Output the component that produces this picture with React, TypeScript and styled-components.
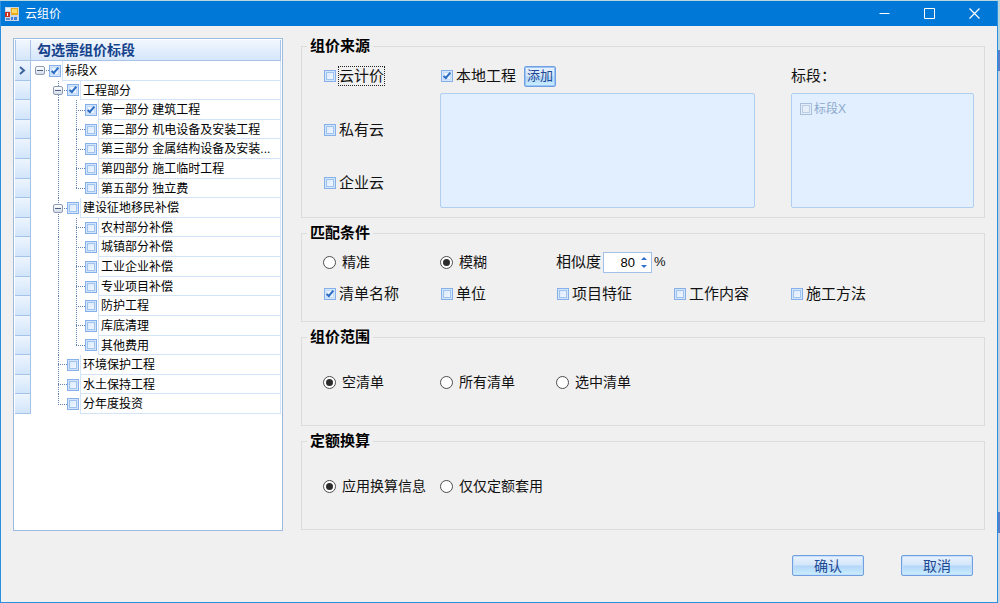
import React, { useState } from "react";
import styled, { createGlobalStyle, css } from "styled-components";

const GlobalStyle = createGlobalStyle`
  *, *::before, *::after { box-sizing: border-box; }
  body {
    margin: 0;
    font-family: "Liberation Sans", "Noto Sans CJK SC", sans-serif;
    font-size: 15px;
    color: #111;
  }
  button, input { font-family: inherit; }
`;

/* ---------- window frame ---------- */

const Desktop = styled.div`
  display: flex;
  min-height: 100vh;
  padding: 1px 2px 0 0;
  background: linear-gradient(
    to bottom,
    #b9d5dd 0 50px,
    #5a7fc6 50px 71px,
    #c6cedb 71px 512px,
    #5a7fc6 512px 533px,
    #ccd3df 533px
  );
`;

const Window = styled.main`
  flex: 1;
  min-width: 0;
  display: flex;
  flex-direction: column;
  background: #f0f0f0;
  border: 1px solid #2d8fe0;
  border-top: 0;
`;

const TitleBar = styled.header`
  display: flex;
  align-items: center;
  height: 25px;
  padding-left: 4px;
  background: #0078d7;
  color: #fff;
`;

const Title = styled.h1`
  flex: 1;
  margin: 0 0 0 6px;
  font-size: 12px;
  line-height: 24px;
  font-weight: 400;
`;

const CaptionButton = styled.button`
  display: grid;
  place-items: center;
  width: 45px;
  height: 25px;
  padding: 0;
  border: 0;
  background: none;
  color: #fff;
`;

const Body = styled.div`
  display: flex;
  gap: 18px;
  padding: 12px 12px 0;
`;

const Footer = styled.footer`
  display: flex;
  justify-content: flex-end;
  gap: 37px;
  padding: 24px 24px 24px;
`;

const Button = styled.button<{ $small?: boolean }>`
  width: ${(p) => (p.$small ? 32 : 72)}px;
  height: 21px;
  padding: 0;
  border: 1px solid #6fa0e2;
  border-radius: 2px;
  background: linear-gradient(#eaf3fe 0%, #d3e6fb 48%, #b4d5f8 52%, #c9f0ff 100%);
  box-shadow: inset 0 0 0 1px ${(p) => (p.$small ? "#9cc3f5" : "#c6defa")};
  color: #1e4a94;
  font-size: ${(p) => (p.$small ? 13 : 14)}px;
  line-height: 18px;
`;

/* ---------- form controls ---------- */

const Check = styled.input.attrs({ type: "checkbox" })`
  appearance: none;
  display: grid;
  place-items: center;
  flex: none;
  width: 12px;
  height: 12px;
  margin: 0;
  border: 1px solid #86b0ea;
  background: linear-gradient(135deg, #d3e6fc, #f8fbff);
  box-shadow: inset 0 0 0 1px #d3e5fb, inset 0 0 0 2px #9fc2ef;

  &:checked {
    background: #eaf3ff;
    box-shadow: inset 0 0 0 1px #d3e5fb, inset 0 0 0 2px #c6dcf8;
  }
  &:checked::after {
    content: "";
    width: 4px;
    height: 8px;
    margin-bottom: 2px;
    border: solid #2a6cc4;
    border-width: 0 2px 2px 0;
    transform: rotate(40deg);
  }
  &:disabled {
    border-color: #a9c0dd;
    background: #e6eefa;
    box-shadow: inset 0 0 0 1px #e3edfa, inset 0 0 0 2px #bccde4;
  }
`;

const Radio = styled.input.attrs({ type: "radio" })`
  appearance: none;
  display: grid;
  place-items: center;
  flex: none;
  width: 13px;
  height: 13px;
  margin: 0;
  border: 1px solid #4d4d4d;
  border-radius: 50%;
  background: #fff;

  &:checked::after {
    content: "";
    width: 7px;
    height: 7px;
    border-radius: 50%;
    background: #2b2b2b;
  }
`;

const CheckLabel = styled.label<{ $focused?: boolean }>`
  display: flex;
  align-items: center;
  gap: 3px;
  padding-left: 1px;
  height: 20px;
  line-height: 20px;
  white-space: nowrap;

  ${(p) =>
    p.$focused &&
    css`
      span {
        line-height: 18px;
        outline: 1px dotted #222;
      }
    `}
`;

const RadioLabel = styled.label`
  display: flex;
  align-items: center;
  gap: 6px;
  height: 20px;
  font-size: 14px;
  line-height: 20px;
  white-space: nowrap;
`;

function CheckField({ label, checked, focused }: { label: string; checked?: boolean; focused?: boolean }) {
  return (
    <CheckLabel $focused={focused}>
      <Check defaultChecked={checked} />
      <span>{label}</span>
    </CheckLabel>
  );
}

function RadioField({ label, name, checked }: { label: string; name: string; checked?: boolean }) {
  return (
    <RadioLabel>
      <Radio name={name} defaultChecked={checked} />
      <span>{label}</span>
    </RadioLabel>
  );
}

/* ---------- section tree ---------- */

const TreePanel = styled.section`
  flex: none;
  width: 270px;
  height: 493px;
  padding: 1px;
  border: 1px solid #9dbbe0;
  background: #fff;
`;

const TreeHeader = styled.div`
  display: flex;
  height: 21px;
  border: solid #a9c4e6;
  border-width: 0 1px 1px;
  background: linear-gradient(#f2f7fe, #d5e6fa);
`;

const HeaderCorner = styled.div`
  width: 15px;
  border-right: 1px solid #a9c4e6;
`;

const HeaderText = styled.h2`
  margin: 0;
  padding-left: 6px;
  font-size: 14px;
  line-height: 20px;
  font-weight: 700;
  color: #15428b;
`;

const TreeRows = styled.div`
  display: grid;
  grid-auto-rows: 1fr;
  height: 353px;
`;

const TreeRow = styled.div`
  display: flex;
  min-height: 0;
`;

const Indicator = styled.div`
  display: grid;
  place-items: center;
  flex: none;
  width: 16px;
  border: solid #a5c3e8;
  border-width: 0 1px 1px 0;
  background: linear-gradient(#edf5fe, #d2e5fb);
`;

const LINE = "#6583b3";
const verticalDots = `repeating-linear-gradient(to bottom, ${LINE} 0 1px, transparent 1px 2px)`;
const horizontalDots = `repeating-linear-gradient(to right, ${LINE} 0 1px, transparent 1px 2px)`;

type GuideKind = "root" | "pass" | "tee" | "elbow" | "blank";

const guideBackground: Record<GuideKind, string> = {
  root: `${horizontalDots} 9px 50% / 9px 1px no-repeat`,
  pass: `${verticalDots} 9px 0 / 1px 100% no-repeat`,
  tee: `${horizontalDots} 9px 50% / 9px 1px no-repeat, ${verticalDots} 9px 0 / 1px 100% no-repeat`,
  elbow: `${horizontalDots} 9px 50% / 9px 1px no-repeat, ${verticalDots} 9px 0 / 1px 50% no-repeat`,
  blank: "none",
};

const Guide = styled.div<{ $kind: GuideKind }>`
  display: flex;
  align-items: center;
  flex: none;
  width: 18px;
  padding-left: 4px;
  background: ${(p) => guideBackground[p.$kind]};
`;

const Expander = styled.button`
  display: grid;
  place-items: center;
  width: 10px;
  height: 9px;
  padding: 0;
  border: 1px solid #8c9bb5;
  border-radius: 2px;
  background: linear-gradient(#fff, #d4dbe8);

  &::after {
    content: "";
    width: 6px;
    height: 1px;
    background: #4d5f80;
  }
`;

const NodeLabel = styled.label`
  display: flex;
  align-items: center;
  flex: 1;
  min-width: 0;
`;

const NodeText = styled.span`
  flex: 1;
  min-width: 0;
  align-self: stretch;
  margin-left: 1px;
  padding-left: 2px;
  border: solid #d3e3f8;
  border-width: 0 1px 1px;
  font-size: 12px;
  line-height: 20px;
  white-space: nowrap;
  overflow: hidden;
  color: #000;
`;

interface TreeNode {
  text: string;
  guides: GuideKind[];
  expandable?: boolean;
  checked?: boolean;
}

const nodes: TreeNode[] = [
  { text: "标段X", guides: ["root"], expandable: true, checked: true },
  { text: "工程部分", guides: ["blank", "tee"], expandable: true, checked: true },
  { text: "第一部分 建筑工程", guides: ["blank", "pass", "tee"], checked: true },
  { text: "第二部分 机电设备及安装工程", guides: ["blank", "pass", "tee"] },
  { text: "第三部分 金属结构设备及安装...", guides: ["blank", "pass", "tee"] },
  { text: "第四部分 施工临时工程", guides: ["blank", "pass", "tee"] },
  { text: "第五部分 独立费", guides: ["blank", "pass", "elbow"] },
  { text: "建设征地移民补偿", guides: ["blank", "tee"], expandable: true },
  { text: "农村部分补偿", guides: ["blank", "pass", "tee"] },
  { text: "城镇部分补偿", guides: ["blank", "pass", "tee"] },
  { text: "工业企业补偿", guides: ["blank", "pass", "tee"] },
  { text: "专业项目补偿", guides: ["blank", "pass", "tee"] },
  { text: "防护工程", guides: ["blank", "pass", "tee"] },
  { text: "库底清理", guides: ["blank", "pass", "tee"] },
  { text: "其他费用", guides: ["blank", "pass", "elbow"] },
  { text: "环境保护工程", guides: ["blank", "tee"] },
  { text: "水土保持工程", guides: ["blank", "tee"] },
  { text: "分年度投资", guides: ["blank", "elbow"] },
];

function SectionTree() {
  return (
    <TreePanel>
      <TreeHeader>
        <HeaderCorner />
        <HeaderText>勾选需组价标段</HeaderText>
      </TreeHeader>
      <TreeRows role="tree">
        {nodes.map((node, row) => (
          <TreeRow key={node.text} role="treeitem" aria-level={node.guides.length}>
            <Indicator>
              {row === 0 && (
                <svg width="7" height="9" viewBox="0 0 7 9" fill="none" stroke="#3c649f" strokeWidth="2">
                  <path d="M1 1l4 3.5L1 8" />
                </svg>
              )}
            </Indicator>
            {node.guides.map((kind, i) => (
              <Guide key={i} $kind={kind}>
                {node.expandable && i === node.guides.length - 1 && <Expander type="button" aria-label="折叠" />}
              </Guide>
            ))}
            <NodeLabel>
              <Check defaultChecked={node.checked} />
              <NodeText>{node.text}</NodeText>
            </NodeLabel>
          </TreeRow>
        ))}
      </TreeRows>
    </TreePanel>
  );
}

/* ---------- option groups ---------- */

const Groups = styled.form`
  flex: 1;
  min-width: 0;
  display: flex;
  flex-direction: column;
  gap: 7px;
`;

const Group = styled.fieldset`
  min-width: 0;
  margin: 0;
  padding: 0;
  border: 1px solid #dcdcdc;
`;

const Legend = styled.legend`
  margin-left: 5px;
  padding: 0 3px;
  font-size: 15px;
  line-height: 16px;
  font-weight: 700;
  color: #000;
`;

const SourceGrid = styled.div`
  display: grid;
  grid-template-columns: 81px minmax(0, 1fr) 183px;
  column-gap: 36px;
  padding: 12px 10px 9px 21px;
`;

const SourceList = styled.div`
  display: flex;
  flex-direction: column;
  justify-content: space-between;
  height: 127px;
`;

const SourceColumn = styled.div`
  display: flex;
  flex-direction: column;
  gap: 7px;
`;

const SourceHead = styled.div`
  display: flex;
  align-items: center;
  gap: 8px;
  height: 20px;
  line-height: 20px;
`;

const ListBox = styled.div`
  height: 115px;
  padding: 6px 7px;
  border: 1px solid #b0cef2;
  border-radius: 2px;
  background: #e2efff;
`;

const ListItem = styled.label`
  display: flex;
  align-items: center;
  gap: 2px;
  height: 18px;
  padding-left: 1px;
  font-size: 12px;
  line-height: 18px;
  color: #8da9cc;
`;

const OptionGrid = styled.div<{ $single?: boolean }>`
  display: grid;
  grid-template-columns: 117px 116px repeat(3, 117px);
  row-gap: 12px;
  padding: ${(p) => (p.$single ? "27px 0 33px 21px" : "11px 0 17px 21px")};
`;

const Similarity = styled.div`
  grid-column: span 3;
  display: flex;
  align-items: center;
  gap: 2px;
  height: 20px;
  line-height: 20px;
`;

const Spinner = styled.div`
  display: flex;
  width: 49px;
  height: 21px;
  border: 1px solid #a3c0ea;
  background: #fff;
`;

const SpinnerInput = styled.input`
  flex: 1;
  min-width: 0;
  padding: 0 2px 0 0;
  border: 0;
  background: none;
  text-align: right;
  font-size: 13px;
  color: #000;
`;

const SpinnerButtons = styled.div`
  display: flex;
  flex-direction: column;
  justify-content: center;
  gap: 3px;
  width: 14px;
`;

const SpinnerButton = styled.button`
  display: grid;
  place-items: center;
  height: 5px;
  padding: 0;
  border: 0;
  background: none;
`;

const Percent = styled.span`
  font-size: 13px;
`;

function AppIcon() {
  return (
    <svg width="14" height="14" viewBox="0 0 14 14" aria-hidden="true">
      <rect width="14" height="14" fill="#c9d6e6" />
      <rect x="1" y="1" width="4" height="3" fill="#eef2f6" />
      <rect x="0" y="5" width="5" height="5" fill="#c9301f" />
      <rect x="2" y="6" width="1" height="3" fill="#fff" />
      <rect x="6" y="1" width="7" height="7" fill="#e9ab1c" />
      <rect x="7" y="2" width="5" height="4" fill="#fbd866" />
      <rect x="6" y="10" width="6" height="3" fill="#3f7fd6" />
      <rect x="8" y="10" width="1" height="3" fill="#c9d6e6" />
      <rect x="1" y="11" width="4" height="2" fill="#5f8cc8" />
    </svg>
  );
}

export default function App() {
  const [similarity, setSimilarity] = useState(80);

  return (
    <Desktop>
      <GlobalStyle />
      <Window>
        <TitleBar>
          <AppIcon />
          <Title>云组价</Title>
          <CaptionButton aria-label="最小化">
            <svg width="11" height="11" fill="none" stroke="currentColor">
              <path d="M0.5 5.5h10" />
            </svg>
          </CaptionButton>
          <CaptionButton aria-label="最大化">
            <svg width="11" height="11" fill="none" stroke="currentColor">
              <path d="M0.5 0.5h10v10h-10z" />
            </svg>
          </CaptionButton>
          <CaptionButton aria-label="关闭">
            <svg width="11" height="11" fill="none" stroke="currentColor" strokeWidth="1.2">
              <path d="M0.5 0.5l10 10M10.5 0.5l-10 10" />
            </svg>
          </CaptionButton>
        </TitleBar>

        <Body>
          <SectionTree />

          <Groups>
            <Group>
              <Legend>组价来源</Legend>
              <SourceGrid>
                <SourceList>
                  <CheckField label="云计价" focused />
                  <CheckField label="私有云" />
                  <CheckField label="企业云" />
                </SourceList>
                <SourceColumn>
                  <SourceHead>
                    <CheckField label="本地工程" checked />
                    <Button type="button" $small>
                      添加
                    </Button>
                  </SourceHead>
                  <ListBox />
                </SourceColumn>
                <SourceColumn>
                  <SourceHead>标段：</SourceHead>
                  <ListBox>
                    <ListItem>
                      <Check disabled />
                      <span>标段X</span>
                    </ListItem>
                  </ListBox>
                </SourceColumn>
              </SourceGrid>
            </Group>

            <Group>
              <Legend>匹配条件</Legend>
              <OptionGrid>
                <RadioField name="match" label="精准" />
                <RadioField name="match" label="模糊" checked />
                <Similarity>
                  <label htmlFor="similarity">相似度</label>
                  <Spinner>
                    <SpinnerInput
                      id="similarity"
                      inputMode="numeric"
                      value={similarity}
                      onChange={(e) => setSimilarity(Number(e.target.value) || 0)}
                    />
                    <SpinnerButtons>
                      <SpinnerButton
                        type="button"
                        aria-label="增加"
                        onClick={() => setSimilarity((v) => Math.min(100, v + 1))}
                      >
                        <svg width="6" height="3" viewBox="0 0 6 3">
                          <path d="M0 3L3 0l3 3z" fill="#2f6fc9" />
                        </svg>
                      </SpinnerButton>
                      <SpinnerButton
                        type="button"
                        aria-label="减少"
                        onClick={() => setSimilarity((v) => Math.max(0, v - 1))}
                      >
                        <svg width="6" height="3" viewBox="0 0 6 3">
                          <path d="M0 0l3 3 3-3z" fill="#2f6fc9" />
                        </svg>
                      </SpinnerButton>
                    </SpinnerButtons>
                  </Spinner>
                  <Percent>%</Percent>
                </Similarity>
                <CheckField label="清单名称" checked />
                <CheckField label="单位" />
                <CheckField label="项目特征" />
                <CheckField label="工作内容" />
                <CheckField label="施工方法" />
              </OptionGrid>
            </Group>

            <Group>
              <Legend>组价范围</Legend>
              <OptionGrid $single>
                <RadioField name="range" label="空清单" checked />
                <RadioField name="range" label="所有清单" />
                <RadioField name="range" label="选中清单" />
              </OptionGrid>
            </Group>

            <Group>
              <Legend>定额换算</Legend>
              <OptionGrid $single>
                <RadioField name="convert" label="应用换算信息" checked />
                <RadioField name="convert" label="仅仅定额套用" />
              </OptionGrid>
            </Group>
          </Groups>
        </Body>

        <Footer>
          <Button type="button">确认</Button>
          <Button type="button">取消</Button>
        </Footer>
      </Window>
    </Desktop>
  );
}
